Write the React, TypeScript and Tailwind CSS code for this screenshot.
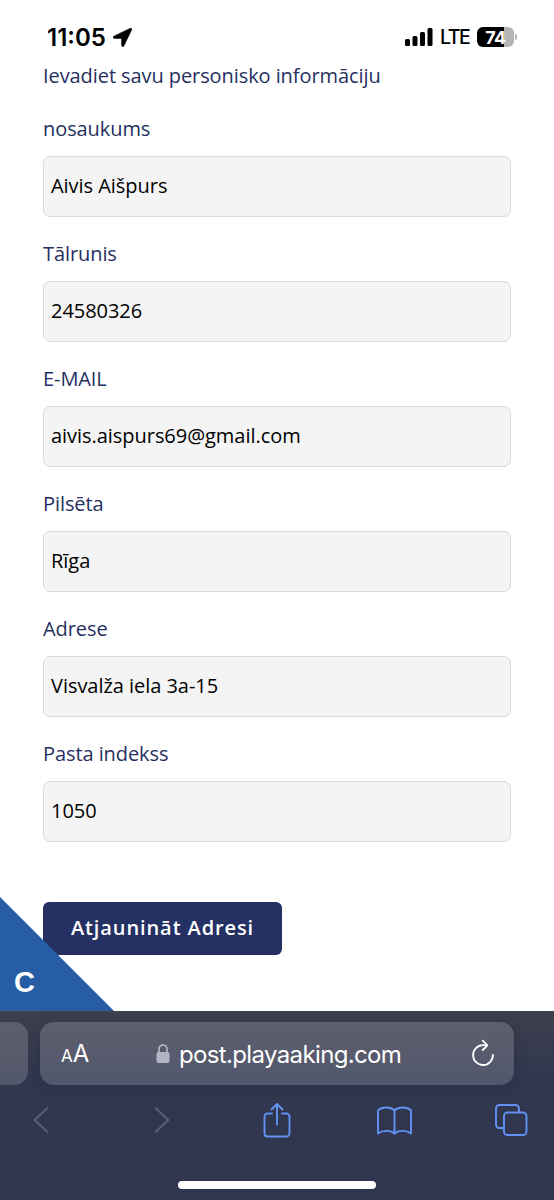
import React from 'react';

const fields = [
  { label: 'nosaukums', value: 'Aivis Aišpurs' },
  { label: 'Tālrunis', value: '24580326' },
  { label: 'E-MAIL', value: 'aivis.aispurs69@gmail.com' },
  { label: 'Pilsēta', value: 'Rīga' },
  { label: 'Adrese', value: 'Visvalža iela 3a-15' },
  { label: 'Pasta indekss', value: '1050' },
];

const StatusBar: React.FC = () => {
  return (
    <div className="h-[62px] pt-[13px] pl-[47px] pr-[37px] flex items-start justify-between text-black font-[Inter,sans-serif]">
      <div className="h-12 flex items-center">
        <span className="pt-px text-[24px] font-semibold tracking-[0px]">11:05</span>
        <svg className="ml-[7px] w-[19px] h-[19px]" viewBox="0 0 19 19" fill="currentColor">
          <path d="M17.2.3.8 8.200c-1.100.5-.9 2.200.4 2.200l6.700.1c.4 0 .6.2.6.6l.1 6.500c0 1.300 1.700 1.600 2.300.4L18.700 1.800C19.200.7 18.300-.2 17.200.3Z" stroke="currentColor" strokeWidth="0.5" />
        </svg>
      </div>
      <div className="h-12 flex items-center">
        <svg className="w-[28px] h-[18px]" viewBox="0 0 28 18" fill="currentColor">
          <rect x="0" y="11" width="5" height="7" rx="1.5" />
          <rect x="7.5" y="8" width="5" height="10" rx="1.5" />
          <rect x="15" y="4" width="5" height="14" rx="1.5" />
          <rect x="22.500" y="0" width="5" height="18" rx="1.5" />
        </svg>
        <span className="ml-[7px] pt-px w-[30px] text-[19.5px] font-medium tracking-[-1.4px]">LTE</span>
        <div className="ml-[7px] w-[37px] h-5 rounded-[6px] bg-linear-to-r from-black from-[73%] to-[#b5b5b5] to-[73%] flex items-center justify-center text-white text-[18px] font-bold tracking-[-0.5px]">
          74
        </div>
        <div className="ml-px w-[2px] h-[6px] rounded-r-full bg-[#b5b5b5]" />
      </div>
    </div>
  );
};

const AddressForm: React.FC = () => {
  return (
    <form className="px-[43px] text-[20px] leading-7 text-[#26305f] tracking-[-0.08px] flex flex-col">
      <p className="h-7">Ievadiet savu personisko informāciju</p>
      <div className="mt-[25px] flex flex-col gap-[23px]">
        {fields.map(({ label, value }) => (
          <label key={label} className="flex flex-col gap-[13px]">
            <span className="h-7">{label}</span>
            <input
              className="w-[468px] h-[61px] px-[7px] pb-[2px] rounded-[7px] border border-[#d5dddd] bg-[#f4f4f4] text-black tracking-[-0.04px] outline-none"
              defaultValue={value}
            />
          </label>
        ))}
      </div>
      <button
        type="button"
        className="mt-[60px] w-[239px] h-[53px] pb-px rounded-[6px] bg-[#253163] text-white font-semibold tracking-[0.9px]"
      >
        Atjaunināt Adresi
      </button>
    </form>
  );
};

const BrowserBar: React.FC = () => {
  return (
    <footer className="h-[189px] flex flex-col bg-linear-to-b from-[#3d404d] via-[#31374f] via-35% to-[#30364f] font-[Inter,sans-serif]">
      <div className="pt-[11px] flex gap-3">
        <div className="w-7 h-[63px] rounded-r-[14px] bg-linear-to-b from-[#5d5f6b] to-[#52576b]" />
        <div className="w-[474px] h-[63px] pl-[21px] pr-[19px] rounded-[14px] bg-linear-to-b from-[#5d5f6b] to-[#52576e] flex items-center text-white shadow-[0_2px_14px_rgba(20,25,45,0.25)]">
          <div className="w-[95px] pt-px flex items-baseline">
            <span className="text-[17px]">A</span>
            <span className="text-[24px]">A</span>
          </div>
          <svg className="w-[14px] h-[19px]" viewBox="0 0 14 19" fill="none">
            <path d="M3 9V5a4 4 0 0 1 8 0v4" stroke="#b4b5c4" strokeWidth="1.7" />
            <rect x="0.5" y="8" width="13" height="11" rx="2" fill="#b4b5c4" />
          </svg>
          <span className="ml-[9px] pt-[2px] text-[24px] tracking-[-0.64px]">post.playaaking.com</span>
          <svg className="ml-auto mb-[2px] w-[24px] h-[28px]" viewBox="0 0 24 28" fill="none" stroke="white" strokeWidth="1.8" strokeLinecap="round" strokeLinejoin="round">
            <path d="M15.800 6.200H12A9.900 9.900 0 1 0 21.900 16" />
            <path d="m11.800 1.600 4.600 4.700-4.600 4.700" />
          </svg>
        </div>
      </div>
      <div className="mt-4 pl-[33px] h-[38px] flex items-center text-[#6293f4]">
        <svg className="w-4 h-[28px] text-[#5c6071]" viewBox="0 0 16 28" fill="none" stroke="currentColor" strokeWidth="1.8" strokeLinecap="round" strokeLinejoin="round">
          <path d="M14.5 2 1.5 14l13 12" />
        </svg>
        <svg className="ml-[105px] w-4 h-[28px] text-[#5c6071]" viewBox="0 0 16 28" fill="none" stroke="currentColor" strokeWidth="1.8" strokeLinecap="round" strokeLinejoin="round">
          <path d="m1.5 2 13 12-13 12" />
        </svg>
        <svg className="ml-[93px] w-[28px] h-[36px]" viewBox="0 0 28 36" fill="none" stroke="currentColor" strokeWidth="1.9" strokeLinecap="round" strokeLinejoin="round">
          <path d="M9 11.500H4.500a3 3 0 0 0-3 3v17a3 3 0 0 0 3 3h19a3 3 0 0 0 3-3v-17a3 3 0 0 0-3-3H19" />
          <path d="M14 22.500V2M8.500 7.500 14 2l5.500 5.500" />
        </svg>
        <svg className="ml-[86px] w-[35px] h-[29px]" viewBox="0 0 35 29" fill="none" stroke="currentColor" strokeWidth="1.9" strokeLinecap="round" strokeLinejoin="round">
          <path d="M17.500 4.500C13.500.5 5 .5 1 4.500V27.500c4.500-3.500 12.500-3.500 16.500 0V4.500Z" />
          <path d="M17.500 4.500c4-4 12.500-4 16.500 0V27.500c-4.500-3.500-12.500-3.500-16.500 0" />
        </svg>
        <svg className="ml-[83px] w-[33px] h-[32px]" viewBox="0 0 33 32" fill="none" stroke="currentColor" strokeWidth="1.9" strokeLinejoin="round">
          <rect x="9" y="8.500" width="22.500" height="22.500" rx="3.500" />
          <path d="M9 24H4.500A3.500 3.500 0 0 1 1 20.500V4.500A3.500 3.500 0 0 1 4.500 1h16A3.500 3.500 0 0 1 24 4.500v4" />
        </svg>
      </div>
      <div className="mt-auto mb-[11px] mx-auto w-[198px] h-[8px] rounded-full bg-white" />
    </footer>
  );
};

const App: React.FC = () => {
  return (
    <div className="w-[554px] h-[1200px] overflow-hidden flex flex-col bg-white font-['Open_Sans',sans-serif]">
      <main className="relative h-[1011px]">
        <StatusBar />
        <AddressForm />
        {/* corner ribbon over the page */}
        <div className="absolute left-0 bottom-0 w-[114px] h-[114px] bg-[#265da5] [clip-path:polygon(0_0,100%_100%,0_100%)]">
          <span className="absolute left-[14px] top-[67px] text-[29px] leading-9 font-bold text-white font-['Liberation_Sans',sans-serif]">
            C
          </span>
        </div>
      </main>
      <BrowserBar />
    </div>
  );
};

export default App;
